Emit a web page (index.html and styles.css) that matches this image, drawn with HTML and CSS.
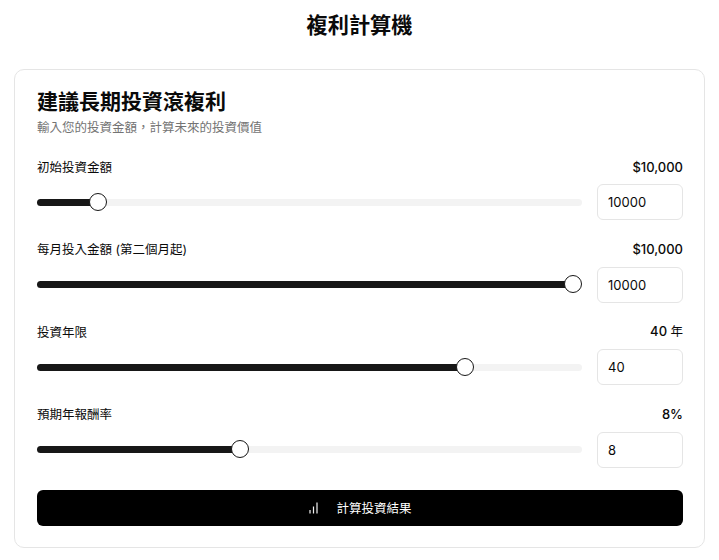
FILE: index.html
```html
<!DOCTYPE html>
<html lang="zh-Hant">
<head>
<meta charset="utf-8">
<title>複利計算機</title>
<link rel="stylesheet" href="styles.css">
</head>
<body>
<h1 class="page-title">複利計算機</h1>
<section class="card">
  <h2 class="card-title">建議長期投資滾複利</h2>
  <p class="card-sub">輸入您的投資金額&#xFF0C;計算未來的投資價值</p>
  <div class="fields">
    <div class="field">
      <div class="field-head"><span class="label">初始投資金額</span><span class="val">$10,000</span></div>
      <div class="field-row">
        <div class="slider"><div class="fill" style="width:61px"></div><div class="thumb" style="left:52px"></div></div>
        <input class="num" type="text" value="10000">
      </div>
    </div>
    <div class="field">
      <div class="field-head"><span class="label">每月投入金額 (第二個月起)</span><span class="val">$10,000</span></div>
      <div class="field-row">
        <div class="slider"><div class="fill" style="width:536px"></div><div class="thumb" style="left:527px"></div></div>
        <input class="num" type="text" value="10000">
      </div>
    </div>
    <div class="field">
      <div class="field-head"><span class="label">投資年限</span><span class="val">40 <span class="unit">年</span></span></div>
      <div class="field-row">
        <div class="slider"><div class="fill" style="width:428px"></div><div class="thumb" style="left:419px"></div></div>
        <input class="num" type="text" value="40">
      </div>
    </div>
    <div class="field">
      <div class="field-head"><span class="label">預期年報酬率</span><span class="val">8%</span></div>
      <div class="field-row">
        <div class="slider"><div class="fill" style="width:203px"></div><div class="thumb" style="left:194px"></div></div>
        <input class="num" type="text" value="8">
      </div>
    </div>
  </div>
  <button class="submit" type="button">
    <svg class="bars" width="12" height="12" viewBox="0 0 12 12" fill="none" stroke="currentColor" stroke-width="1.2"><path d="M2 11.5V8M5.5 11.5V4.5M9 11.5V0.5"/></svg>
    <span>計算投資結果</span>
  </button>
</section>
</body>
</html>
```
FILE: styles.css
```css
* { box-sizing: border-box; }
html, body { margin: 0; padding: 0; }
body {
  background: #fff;
  color: #0a0a0a;
  font-family: Inter, "Noto Sans CJK TC", "Noto Sans", sans-serif;
  padding: 0 14px;
  width: 719px;
  height: 560px;
  overflow: hidden;
}
.page-title {
  margin: 0;
  height: 69px;
  padding-top: 10px;
  font-size: 21.2px;
  line-height: 30px;
  font-weight: 700;
  text-align: center;
}
.card {
  width: 691px;
  height: 479px;
  border: 1px solid #e5e5e5;
  border-radius: 10px;
  padding: 17px 21px 0 22px;
}
.card-title {
  margin: 0;
  font-size: 21px;
  line-height: 30px;
  font-weight: 700;
}
.card-sub {
  margin: 2px 0 0;
  font-size: 12.5px;
  line-height: 18px;
  color: #737373;
}
.fields {
  margin-top: 21px;
  display: flex;
  flex-direction: column;
  gap: 20.6px;
}
.field-head {
  display: flex;
  justify-content: space-between;
  align-items: center;
  height: 18px;
  font-size: 12.5px;
  line-height: 18px;
}
.label { padding-top: 1px; }
.val { font-size: 13px; font-weight: 500; padding-bottom: 1px; }
.unit { font-size: 12.5px; font-weight: 400; }
.field-row {
  display: flex;
  align-items: center;
  gap: 15px;
  margin-top: 8px;
}
.slider {
  position: relative;
  flex: 1;
  height: 7px;
  border-radius: 4px;
  background: #f3f3f3;
}
.fill {
  height: 100%;
  border-radius: 4px;
  background: #171717;
}
.thumb {
  position: absolute;
  top: -6px;
  width: 18px;
  height: 18px;
  border-radius: 50%;
  border: 1.5px solid #171717;
  background: #fff;
}
.num {
  width: 86px;
  height: 36px;
  border: 1px solid #e5e5e5;
  border-radius: 6px;
  padding: 0 10px;
  font: inherit;
  font-size: 13px;
  color: #0a0a0a;
  background: #fff;
  outline: none;
}
.submit {
  margin-top: 22px;
  width: 100%;
  height: 36px;
  border: 0;
  border-radius: 6px;
  background: #000;
  color: #fff;
  font: inherit;
  font-size: 12.5px;
  font-weight: 400;
  display: flex;
  align-items: center;
  justify-content: center;
  gap: 16px;
}
.bars { color: #f0f0f0; }
```
